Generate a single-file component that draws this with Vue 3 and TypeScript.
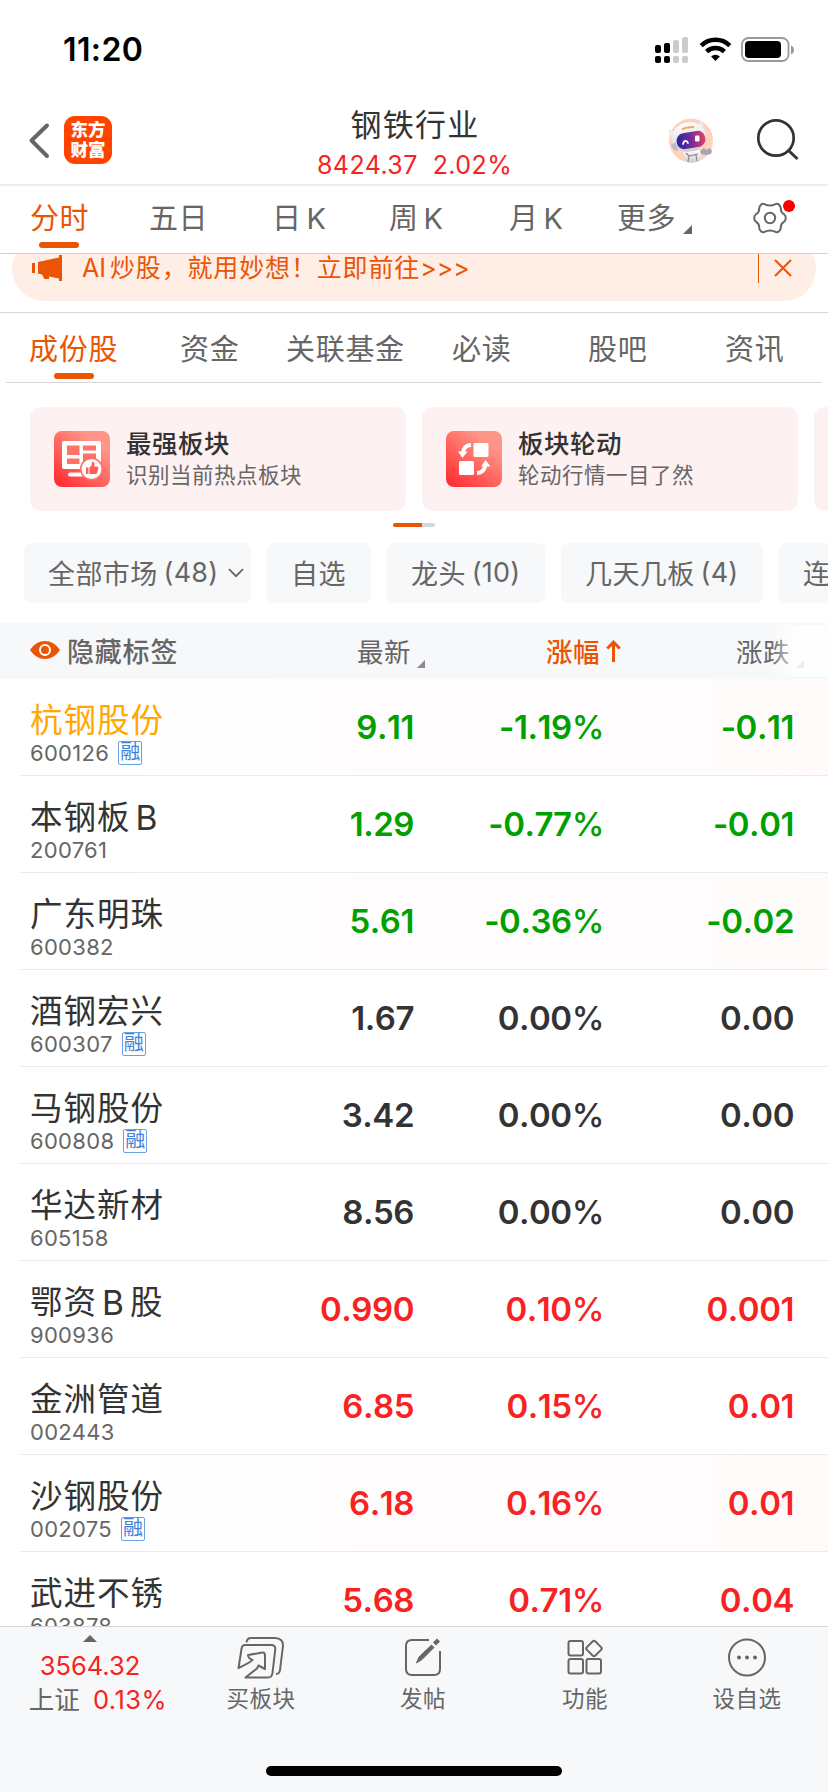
<script setup lang="ts">
interface Part {
  text: string
  latin: boolean
}
interface Stock {
  name: string
  code: string
  margin?: boolean
  price: string
  pct: string
  diff: string
  tone: 'up' | 'down' | 'flat'
  held?: boolean
  tint?: boolean
}

const periods: string[] = ['分时', '五日', '日K', '周K', '月K', '更多']
const sections: string[] = ['成份股', '资金', '关联基金', '必读', '股吧', '资讯']
const filters = [
  { label: '全部市场', count: '(48)', open: true, cls: 'f1' },
  { label: '自选', count: '', open: false, cls: 'f2' },
  { label: '龙头', count: '(10)', open: false, cls: 'f3' },
  { label: '几天几板', count: '(4)', open: false, cls: 'f4' },
  { label: '连', count: '', open: false, cls: 'f5' },
]
const stocks: Stock[] = [
  { name: '杭钢股份', code: '600126', margin: true, price: '9.11', pct: '-1.19', diff: '-0.11', tone: 'down', held: true, tint: true },
  { name: '本钢板B', code: '200761', price: '1.29', pct: '-0.77', diff: '-0.01', tone: 'down' },
  { name: '广东明珠', code: '600382', price: '5.61', pct: '-0.36', diff: '-0.02', tone: 'down', tint: true },
  { name: '酒钢宏兴', code: '600307', margin: true, price: '1.67', pct: '0.00', diff: '0.00', tone: 'flat' },
  { name: '马钢股份', code: '600808', margin: true, price: '3.42', pct: '0.00', diff: '0.00', tone: 'flat' },
  { name: '华达新材', code: '605158', price: '8.56', pct: '0.00', diff: '0.00', tone: 'flat' },
  { name: '鄂资B股', code: '900936', price: '0.990', pct: '0.10', diff: '0.001', tone: 'up' },
  { name: '金洲管道', code: '002443', price: '6.85', pct: '0.15', diff: '0.01', tone: 'up' },
  { name: '沙钢股份', code: '002075', margin: true, price: '6.18', pct: '0.16', diff: '0.01', tone: 'up', tint: true },
  { name: '武进不锈', code: '603878', price: '5.68', pct: '0.71', diff: '0.04', tone: 'up' },
]

function parts(name: string): Part[] {
  return name
    .split(/([A-Z]+)/)
    .filter((s) => s.length > 0)
    .map((s) => ({ text: s, latin: /[A-Z]/.test(s) }))
}
</script>

<template>
  <div class="screen">
    <div class="status">
      <span class="clock">11:20</span>
      <svg class="sysicons" width="140" height="28" viewBox="0 0 140 28">
        <g>
          <rect x="0" y="8" width="6" height="8" rx="2" />
          <rect x="9" y="6" width="6" height="10" rx="2" />
          <rect x="0" y="19" width="6" height="7" rx="2" />
          <rect x="9" y="19" width="6" height="7" rx="2" />
        </g>
        <g fill="#cbcbcb">
          <rect x="18" y="3" width="6" height="13" rx="2" />
          <rect x="27" y="0" width="6" height="16" rx="2" />
          <rect x="18" y="19" width="6" height="7" rx="2" />
          <rect x="27" y="19" width="6" height="7" rx="2" />
        </g>
        <g fill="none" stroke="#000" stroke-width="4.4">
          <path d="M46.2 8.6a20.4 20.4 0 0 1 28.6 0" />
          <path d="M51.6 14.6a12.8 12.8 0 0 1 17.8 0" />
        </g>
        <path d="M60.500 24l-4.400-4.600a6.500 6.500 0 0 1 8.800 0z" />
        <rect x="87" y="1" width="46.500" height="23" rx="6.500" fill="none" stroke="#9a9a9a" stroke-width="1.800" />
        <rect x="90" y="4" width="36" height="17" rx="4" />
        <path d="M136 8.500c4 1.200 4 7.800 0 9z" fill="#9a9a9a" />
      </svg>
    </div>

    <header class="head">
      <svg class="back" width="22" height="38" viewBox="0 0 22 38">
        <path d="M19 3.500L3.500 18.500L19 34" fill="none" stroke="#666" stroke-width="4" stroke-linecap="round" stroke-linejoin="round" />
      </svg>
      <div class="brand"><span>东方</span><span>财富</span></div>
      <div class="titles">
        <div class="title">钢铁行业</div>
        <div class="quote"><span>8424.37</span><span>2.02%</span></div>
      </div>
      <svg class="robot" width="46" height="48" viewBox="0 0 46 48">
        <defs>
          <linearGradient id="visor" x1="0" y1="0" x2="1" y2="0">
            <stop offset="0" stop-color="#2823a4" />
            <stop offset="0.500" stop-color="#762c9c" />
            <stop offset="1" stop-color="#e2435e" />
          </linearGradient>
          <linearGradient id="shell" x1="0" y1="0" x2="0" y2="1">
            <stop offset="0" stop-color="#fff" />
            <stop offset="1" stop-color="#cfcbd0" />
          </linearGradient>
        </defs>
        <circle cx="23" cy="23.500" r="22" fill="#fdd3bf" />
        <path d="M1 12c3 1 5 3 6 5l-3 3c-3-2-4-5-3-8zM31 8c1-3 2-4 3-4 2 3 1 7 0 9z" fill="#eeebee" />
        <path d="M15 35l17-2 2 9c-3 3-11 5-15 3z" fill="url(#shell)" />
        <path d="M18 36l3 3 9-2M21 39l-1 6M28 38l1 6" stroke="#8c8690" stroke-width="1.200" fill="none" />
        <path d="M32 34l4-3 2 2 4-2 2 3-1 3-5 1-5-1z" fill="#aaa5ad" />
        <ellipse cx="21" cy="20" rx="17.500" ry="14.500" fill="url(#shell)" transform="rotate(-10 21 20)" />
        <path d="M3 27l5-1 2 8c-4 0-6-3-7-7z" fill="#bdb8c2" />
        <rect x="8.500" y="15" width="29" height="16" rx="7.500" fill="url(#visor)" transform="rotate(-10 23 23)" />
        <path d="M15 27c1-4 4-4 5-1" fill="none" stroke="#fff" stroke-width="1.800" stroke-linecap="round" />
        <rect x="27" y="18.500" width="4.500" height="6" rx="1.200" fill="#fff" />
        <path d="M14 12.500c3-2 7-2.500 12-2.500" stroke="#f3a767" stroke-width="2" fill="none" />
      </svg>
      <svg class="search" width="44" height="44" viewBox="0 0 44 44">
        <circle cx="20" cy="20" r="17.700" fill="none" stroke="#333" stroke-width="2.700" />
        <path d="M32.500 32.500L41.500 41" stroke="#333" stroke-width="3" />
      </svg>
    </header>

    <nav class="periods">
      <div v-for="(p, i) in periods" :key="p" class="tab" :class="{ active: i === 0 }">
        <span v-for="(q, k) in parts(p)" :key="k" :class="{ latin: q.latin }">{{ q.text }}</span>
        <svg v-if="i === 5" class="corner" width="9" height="9" viewBox="0 0 9 9"><path d="M9 0V9H0z" fill="#666" /></svg>
        <i v-if="i === 0" class="bar"></i>
      </div>
      <div class="gear">
        <svg width="34" height="32" viewBox="-17 -16 34 32" fill="none" stroke="#666" stroke-width="2">
          <path d="M-9 -13.200Q-7.500 -14.800 -5.500 -13.800Q0 -11 5.500 -13.800Q7.500 -14.800 9 -13.200Q11 -11.500 10.800 -9Q10.800 -5.500 14 -3.800Q15.800 -2.500 15.800 0Q15.800 2.500 14 3.800Q10.800 5.500 10.800 9Q11 11.500 9 13.200Q7.500 14.800 5.500 13.800Q0 11 -5.500 13.800Q-7.500 14.800 -9 13.200Q-11 11.500 -10.800 9Q-10.800 5.500 -14 3.800Q-15.800 2.500 -15.800 0Q-15.800 -2.500 -14 -3.800Q-10.800 -5.500 -10.800 -9Q-11 -11.500 -9 -13.200Z" />
          <circle r="5.200" />
        </svg>
        <i class="dot"></i>
      </div>
    </nav>

    <div class="promo">
      <div class="pill">
        <svg class="horn" width="31" height="26" viewBox="0 0 31 26" fill="#ea5504">
          <path d="M0 8h3v10H0zM6 7L27 2.500V0h3v26h-3v-2.500L17 21.500v2.500h-4.500L10 19.500 6 18.500z" />
        </svg>
        <span class="promotext"><span class="ai">AI</span>炒股，就用妙想！立即前往<span class="gt">&gt;&gt;&gt;</span></span>
        <i class="sep"></i>
        <svg class="close" width="18" height="18" viewBox="0 0 18 18"><path d="M1 1l16 16M17 1L1 17" stroke="#ea5504" stroke-width="2" /></svg>
      </div>
    </div>

    <nav class="sections">
      <div v-for="(s, i) in sections" :key="s" class="tab" :class="{ active: i === 0 }">
        <span>{{ s }}</span>
        <i v-if="i === 0" class="bar"></i>
      </div>
    </nav>

    <div class="cards">
      <div class="card">
        <svg class="cardicon" width="56" height="56" viewBox="0 0 56 56">
          <defs>
            <linearGradient id="warm" x1="0" y1="1" x2="0.800" y2="0">
              <stop offset="0.100" stop-color="#ff3236" />
              <stop offset="0.850" stop-color="#ff9587" />
            </linearGradient>
          </defs>
          <rect width="56" height="56" rx="8" fill="url(#warm)" />
          <rect x="8" y="10" width="39" height="28" rx="2" fill="#fff" />
          <path d="M13 14.500h12.500v9.500H13zM29 14.500h13v5H29zM13 27.500h12.500v5.500H13zM29 22.500h13v10.500H29z" fill="#ff7269" />
          <path d="M16 43.500h14" stroke="#fff" stroke-width="4" stroke-linecap="round" />
          <circle cx="37.500" cy="38" r="11.500" fill="#ff7068" />
          <circle cx="37.500" cy="38" r="10" fill="#fff" />
          <path d="M32 36.500h2.500v6.500H32zM35.500 36.500l2-2 .500-3.500c2-.500 3 1 2.500 3l-.400 1.500h3q1.500.200 1.200 1.800l-1 4.200q-.300 1.500-2 1.500h-5.800z" fill="#ff5d57" />
        </svg>
        <div class="cardtext"><b>最强板块</b><span>识别当前热点板块</span></div>
      </div>
      <div class="card">
        <svg class="cardicon" width="56" height="56" viewBox="0 0 56 56">
          <rect width="56" height="56" rx="8" fill="url(#warm)" />
          <rect x="27.500" y="12" width="15" height="14" rx="1.500" fill="#fff" />
          <rect x="13" y="30" width="15" height="14" rx="1.500" fill="#fff" />
          <path d="M25 14Q17.500 14.500 17 22" fill="none" stroke="#fff" stroke-width="4" />
          <path d="M12 20.500h9.500L16.500 27z" fill="#fff" />
          <path d="M31 42Q38.500 41.500 39.500 34" fill="none" stroke="#fff" stroke-width="4" />
          <path d="M35 35.500h9.500L39.500 29z" fill="#fff" />
        </svg>
        <div class="cardtext"><b>板块轮动</b><span>轮动行情一目了然</span></div>
      </div>
      <div class="card"></div>
    </div>
    <div class="pager"><i></i></div>

    <div class="filters">
      <div v-for="f in filters" :key="f.label" class="chip" :class="f.cls">
        <span>{{ f.label }}</span>
        <span v-if="f.count" class="count">{{ f.count }}</span>
        <svg v-if="f.open" class="chev" width="16" height="10" viewBox="0 0 16 10"><path d="M1 1.200l7 7 7-7" fill="none" stroke="#666" stroke-width="1.800" /></svg>
      </div>
    </div>

    <div class="thead">
      <svg class="eye" width="30" height="18" viewBox="0 0 30 18">
        <path d="M0 9C8-3 22-3 30 9C22 21 8 21 0 9z" fill="#ea5504" />
        <circle cx="15" cy="9" r="5" fill="none" stroke="#fff" stroke-width="2" />
      </svg>
      <b class="hide">隐藏标签</b>
      <span class="h1">最新</span>
      <svg class="corner" width="8" height="8" viewBox="0 0 9 9"><path d="M9 0V9H0z" fill="#8a8a8c" /></svg>
      <span class="h2">涨幅</span>
      <svg class="arrow" width="15" height="22" viewBox="0 0 15 22"><path d="M7.500 22V2.500M1.300 8.500L7.500 2.200l6.200 6.300" fill="none" stroke="#ea5504" stroke-width="3" /></svg>
      <span class="h3">涨跌</span>
      <svg class="corner" width="8" height="8" viewBox="0 0 9 9"><path d="M9 0V9H0z" fill="#8a8a8c" /></svg>
      <i class="fade"></i>
    </div>

    <div class="list">
      <div v-for="s in stocks" :key="s.code" class="row" :class="{ tint: s.tint }">
        <div class="ident">
          <div class="name" :class="{ held: s.held }">
            <span v-for="(p, i) in parts(s.name)" :key="i" :class="{ latin: p.latin }">{{ p.text }}</span>
          </div>
          <div class="code"><span>{{ s.code }}</span><em v-if="s.margin">融</em></div>
        </div>
        <span class="num" :class="s.tone">{{ s.price }}</span>
        <span class="num" :class="s.tone">{{ s.pct }}<small>%</small></span>
        <span class="num" :class="s.tone">{{ s.diff }}</span>
      </div>
    </div>

    <footer class="bottom">
      <div class="index">
        <svg width="14" height="7" viewBox="0 0 14 7"><path d="M7 0l7 7H0z" fill="#666" /></svg>
        <div class="value">3564.32</div>
        <div class="change"><span>上证</span><span class="red">0.13%</span></div>
      </div>
      <div class="action">
        <svg width="48" height="42" viewBox="0 0 48 42" fill="none" stroke="#666" stroke-width="2" stroke-linejoin="round">
          <path d="M9.500 5.500Q10 1 14 1H38Q46.500 1.500 46 9L43 33Q42.500 37 39 37" />
          <path d="M1.500 31L4.500 12Q5 8 8 8H34Q38.500 8 38.300 12L35.500 36Q35 40.500 31 40.500H8.500L20 31.500L21.500 28.500L28 32V19Q28 15 25.500 15.500L11 18Q11 21 15.500 23Q14 25 1.500 31Z" />
        </svg>
        <span>买板块</span>
      </div>
      <div class="action">
        <svg width="48" height="42" viewBox="0 0 48 42" fill="none" stroke="#666" stroke-width="2">
          <path d="M30 3H13Q7 3 7 9V32Q7 38 13 38H35Q41 38 41 32V14" />
          <path d="M17.500 26L20 20 32.500 8 35 10.500 23 22.500z" fill="#666" stroke-width="1" />
          <path d="M35.500 7L39.500 3" stroke-width="4.500" />
        </svg>
        <span>发帖</span>
      </div>
      <div class="action">
        <svg width="48" height="42" viewBox="0 0 48 42" fill="none" stroke="#666" stroke-width="2">
          <rect x="7.500" y="4" width="14.500" height="14.500" rx="2" />
          <rect x="7.500" y="22" width="14.500" height="14.500" rx="2" />
          <rect x="25.500" y="22" width="14.500" height="14.500" rx="2" />
          <rect x="27" y="5.500" width="12" height="12" rx="2" transform="rotate(45 33 11.500)" />
        </svg>
        <span>功能</span>
      </div>
      <div class="action">
        <svg width="48" height="42" viewBox="0 0 48 42">
          <circle cx="24" cy="20.500" r="18" fill="none" stroke="#666" stroke-width="2" />
          <g fill="#666"><circle cx="16" cy="20.500" r="2" /><circle cx="24" cy="20.500" r="2" /><circle cx="32" cy="20.500" r="2" /></g>
        </svg>
        <span>设自选</span>
      </div>
      <i class="home"></i>
    </footer>
  </div>
</template>

<style>
html,
body {
  background: #fff;
  overflow: hidden;
}
</style>

<style scoped>
.screen {
  width: 828px;
  height: 1792px;
  display: flex;
  flex-direction: column;
  overflow: hidden;
  background: #fff;
  color: #666;
  font-family: Inter, 'Noto Sans CJK SC', sans-serif;
  white-space: nowrap;
}
.screen * {
  box-sizing: border-box;
}
.screen > * {
  flex: none;
}
svg {
  display: block;
  flex: none;
}
i,
em {
  font-style: normal;
}
.status {
  height: 95px;
  display: flex;
  justify-content: space-between;
  padding: 0 33px 0 63px;
}
.clock {
  color: #000;
  font-size: 32px;
  font-weight: 600;
  line-height: 40px;
  letter-spacing: 0.400px;
  margin-top: 30px;
}
.sysicons {
  margin-top: 37px;
}
.head {
  height: 91px;
  display: flex;
  border-bottom: 2px solid #ededed;
}
.back {
  margin: 27px 0 0 28px;
}
.brand {
  width: 48px;
  height: 48px;
  margin: 21px 0 0 14px;
  border-radius: 11px;
  background: #ff4400;
  color: #fff;
  display: flex;
  flex-direction: column;
  align-items: center;
  padding-top: 4px;
  font-size: 17.500px;
  font-weight: 900;
}
.brand span {
  height: 20px;
  line-height: 20px;
}
.titles {
  width: 240px;
  margin-left: 182px;
  text-align: center;
}
.title {
  color: #333;
  font-size: 31px;
  line-height: 40px;
  letter-spacing: 1.200px;
  padding-left: 2px;
  margin-top: 10px;
}
.quote {
  color: #f82222;
  font-size: 25px;
  line-height: 30px;
  letter-spacing: 0.400px;
  margin-top: 5px;
  margin-left: 13px;
  display: flex;
  gap: 15px;
  padding-left: 10px;
}
.robot {
  margin: 22px 0 0 134px;
}
.search {
  margin: 23px 0 0 42px;
}
.periods {
  height: 68px;
  display: grid;
  grid-template-columns: 119px 123px 117px 120px 108px 136px 60px;
  padding-left: 30px;
  border-bottom: 1px solid #d0d1d4;
}
.tab {
  position: relative;
  display: flex;
  font-size: 29px;
  line-height: 40px;
  letter-spacing: 0.600px;
}
.periods .tab {
  padding-top: 13px;
}
.active {
  color: #ea5504;
}
.bar {
  position: absolute;
  left: 9px;
  bottom: 5px;
  width: 40px;
  height: 6px;
  border-radius: 3px;
  background: #ea5504;
}
.periods .corner {
  margin: 26px 0 0 7px;
}
.gear {
  position: relative;
  padding-top: 16px;
}
.dot {
  position: absolute;
  left: 30px;
  top: 14px;
  width: 12px;
  height: 12px;
  border-radius: 50%;
  background: #f00;
}
.promo {
  height: 59px;
  overflow: hidden;
  display: flex;
  align-items: flex-end;
  padding: 0 12px 11px;
  border-bottom: 1px solid #d5d6d9;
}
.pill {
  flex: 1;
  height: 64px;
  border-radius: 32px;
  background: #feeee6;
  display: flex;
  align-items: center;
  color: #ea5504;
  padding: 0 0 2px 20px;
}
.promotext {
  margin-left: 19px;
  width: 676px;
  font-size: 25px;
  line-height: 36px;
  letter-spacing: 0.850px;
}
.ai {
  letter-spacing: 0;
  margin-right: 4px;
}
.gt {
  letter-spacing: 0;
}
.sep {
  width: 1px;
  height: 30px;
  background: #ea5504;
}
.close {
  margin-left: 15px;
}
.sections {
  margin: 0 6px;
  height: 70px;
  display: grid;
  grid-template-columns: 151px 106px 166px 136px 137px 90px;
  padding-left: 23px;
  border-bottom: 1px solid #d5d6d9;
}
.sections .tab {
  padding-top: 17px;
  letter-spacing: 0.700px;
}
.sections .bar {
  left: 25px;
  bottom: 3px;
}
.cards {
  margin: 24px 0 0 30px;
  display: flex;
  gap: 16px;
}
.card {
  width: 376px;
  height: 104px;
  flex: none;
  border-radius: 11px;
  background: #fef1f1;
  padding: 24px;
  display: flex;
  gap: 16px;
}
.cardtext {
  display: flex;
  flex-direction: column;
  margin-top: -4px;
}
.cardtext b {
  color: #333;
  font-size: 25.500px;
  font-weight: 500;
  line-height: 34px;
  letter-spacing: 0.500px;
}
.cardtext span {
  font-size: 21.500px;
  line-height: 28px;
  letter-spacing: 0.500px;
}
.pager {
  width: 42px;
  height: 4px;
  margin: 12px 0 0 393px;
  border-radius: 2px;
  background: #d3d6dc;
  overflow: hidden;
}
.pager i {
  display: block;
  width: 29px;
  height: 4px;
  background: #ea5504;
}
.filters {
  margin: 16px 0 0 24px;
  display: flex;
  gap: 16px;
}
.chip {
  height: 60px;
  flex: none;
  border-radius: 7px;
  background: #f7f8fa;
  display: flex;
  align-items: center;
  padding: 0 0 2px 24px;
  font-size: 27px;
  letter-spacing: 0.400px;
}
.count {
  margin-left: 6px;
  letter-spacing: 0.200px;
}
.chev {
  margin: 2px 0 0 10px;
}
.f1 {
  width: 227px;
}
.f2 {
  width: 104px;
}
.f3 {
  width: 158px;
}
.f4 {
  width: 202px;
}
.f5 {
  width: 110px;
}
.thead {
  position: relative;
  margin-top: 20px;
  height: 56px;
  background: #f7f8fa;
  display: flex;
  align-items: center;
  padding: 0 0 2px 30px;
  font-size: 26.500px;
  letter-spacing: 0.600px;
}
.hide {
  width: 290px;
  margin-left: 7px;
  font-weight: 500;
  font-size: 27px;
  letter-spacing: 0.800px;
}
.h1 {
  width: 60px;
}
.h2 {
  width: 55px;
  margin-left: 121px;
  color: #ea5504;
  font-weight: 500;
}
.arrow {
  margin: 1px 0 0 5px;
}
.h3 {
  margin-left: 115px;
  width: 60px;
}
.thead .corner {
  margin-top: 27px;
}
.fade {
  position: absolute;
  right: 0;
  top: 2px;
  width: 58px;
  height: 52px;
  background: linear-gradient(90deg, rgba(255, 255, 255, 0), rgba(255, 255, 255, 0.850) 50%);
}
.list {
  height: 947px;
  overflow: hidden;
}
.row {
  height: 97px;
  display: grid;
  grid-template-columns: 214px 200px 190px 190px;
  position: relative;
}
.row::after {
  content: '';
  position: absolute;
  left: 20px;
  right: 0;
  bottom: 0;
  height: 1px;
  background: #ebebeb;
}
.tint {
  background: linear-gradient(90deg, #fff 15%, #fefcfc 45%, #fefcfc 85%, #fffaf8);
}
.ident {
  padding: 21px 0 0 30px;
}
.name {
  color: #333;
  font-size: 32.500px;
  line-height: 42px;
  letter-spacing: 1px;
  display: flex;
}
.name.held {
  color: #ffa800;
}
.latin {
  margin: 0 4px 0 5px;
}
.name .latin {
  font-size: 33.500px;
  margin: 0 5px 0 5px;
}
.code {
  display: flex;
  align-items: center;
  font-size: 22px;
  line-height: 24px;
  height: 24px;
  letter-spacing: 0.300px;
  margin-top: -1px;
}
.code em {
  width: 24px;
  height: 24px;
  margin-left: 9px;
  border: 1px solid #6aa0e2;
  border-radius: 2px;
  color: #3c82d8;
  font-size: 20px;
  line-height: 21px;
  letter-spacing: 0;
  display: flex;
  justify-content: center;
}
.num {
  text-align: right;
  font-size: 33px;
  font-weight: 600;
  line-height: 40px;
  padding-top: 28px;
  letter-spacing: -0.450px;
  font-kerning: none;
}
.num small {
  font-size: 33px;
  font-weight: 500;
}
.up {
  color: #f82222;
}
.down {
  color: #00a000;
}
.flat {
  color: #333;
}
.bottom {
  position: relative;
  height: 166px;
  background: #f7f8fa;
  border-top: 1px solid #d3d4de;
  display: grid;
  grid-template-columns: 180px 162px 162px 162px 162px;
}
.index {
  display: flex;
  flex-direction: column;
  align-items: center;
  padding-top: 8px;
}
.value {
  color: #f82222;
  font-size: 25.500px;
  line-height: 32px;
  margin-top: 8px;
}
.change {
  display: flex;
  gap: 13px;
  font-size: 25.500px;
  line-height: 34px;
  margin: 1px 0 0 16px;
}
.red {
  color: #f82222;
  letter-spacing: 0.500px;
}
.action {
  display: flex;
  flex-direction: column;
  align-items: center;
  padding-top: 10px;
  font-size: 22.500px;
  letter-spacing: 0.500px;
}
.action span {
  line-height: 32px;
  margin-top: 4px;
}
.home {
  position: absolute;
  left: 266px;
  bottom: 16px;
  width: 296px;
  height: 10px;
  border-radius: 5px;
  background: #000;
}
</style>
